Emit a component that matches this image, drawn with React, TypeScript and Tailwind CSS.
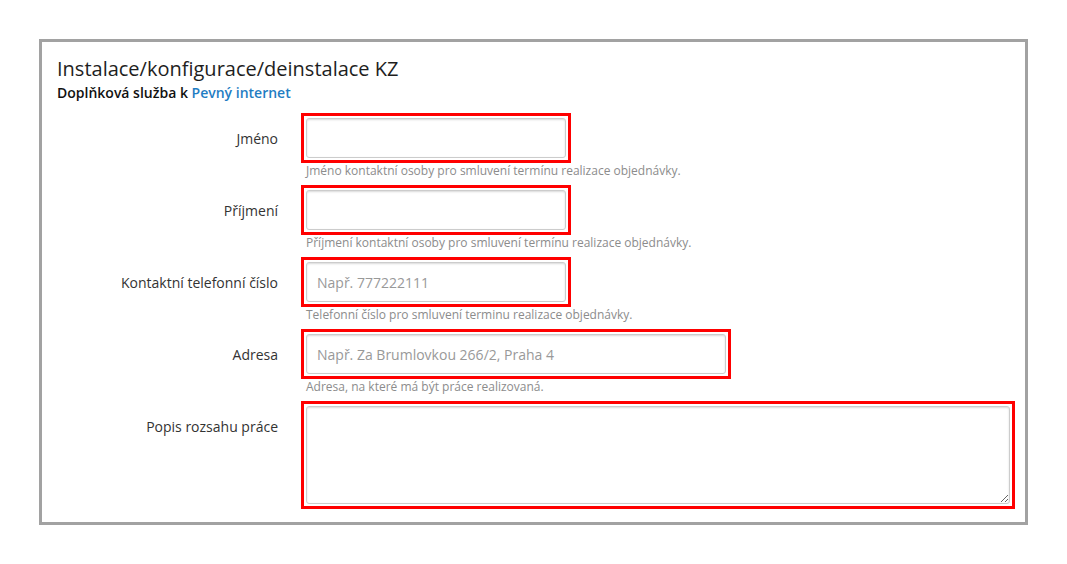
import React from "react";

type Field = {
  label: string;
  help: string;
  placeholder?: string;
  width: string;
  multiline?: boolean;
};

const fields: Field[] = [
  { label: "Jméno", help: "Jméno kontaktní osoby pro smluvení termínu realizace objednávky.", width: "w-[270px]" },
  { label: "Příjmení", help: "Příjmení kontaktní osoby pro smluvení termínu realizace objednávky.", width: "w-[270px]" },
  {
    label: "Kontaktní telefonní číslo",
    help: "Telefonní číslo pro smluvení terminu realizace objednávky.",
    placeholder: "Např. 777222111",
    width: "w-[270px]",
  },
  {
    label: "Adresa",
    help: "Adresa, na které má být práce realizovaná.",
    placeholder: "Např. Za Brumlovkou 266/2, Praha 4",
    width: "w-[430px]",
  },
  { label: "Popis rozsahu práce", help: "", width: "w-full", multiline: true },
];

const inputCls =
  "block w-full rounded-[3px] border border-[#cccccc] bg-white px-[10px] text-[14px] text-[#333] shadow-[inset_0_1px_2px_rgba(0,0,0,0.15)] outline-none placeholder:text-[#999]";

export default function App() {
  return (
    <div className="min-h-screen bg-white p-[39px] font-['Open_Sans',sans-serif]">
      <div className="border-[3px] border-[#a2a2a2] bg-white pl-[15px] pr-[10px] pt-[13px] pb-[13px]">
        <h1 className="text-[20px] leading-[28px] text-[#1e1e1e]">Instalace/konfigurace/deinstalace KZ</h1>
        <p className="text-[14px] leading-[20px] font-semibold text-[#111]">
          Doplňková služba k <span className="text-[#1f7dc3]">Pevný internet</span>
        </p>

        <div className="mt-[10px] grid grid-cols-[221px_1fr] gap-x-[23px]">
          {fields.map((f, i) => (
            <React.Fragment key={f.label}>
              <label className="pt-[16px] text-right text-[14px] leading-[20px] text-[#333]">{f.label}</label>
              <div className={i < fields.length - 1 ? "mb-[6px]" : ""}>
                <div className={`${f.width} border-[3px] border-[#ff0000] p-[2px]`}>
                  {f.multiline ? (
                    <textarea className={`${inputCls} h-[98px] py-[6px]`} />
                  ) : (
                    <input type="text" placeholder={f.placeholder} className={`${inputCls} h-[40px]`} />
                  )}
                </div>
                {f.help ? (
                  <div className="pl-[5px] text-[12px] leading-[16px] text-[#8c8c8c]">{f.help}</div>
                ) : null}
              </div>
            </React.Fragment>
          ))}
        </div>
      </div>
    </div>
  );
}
